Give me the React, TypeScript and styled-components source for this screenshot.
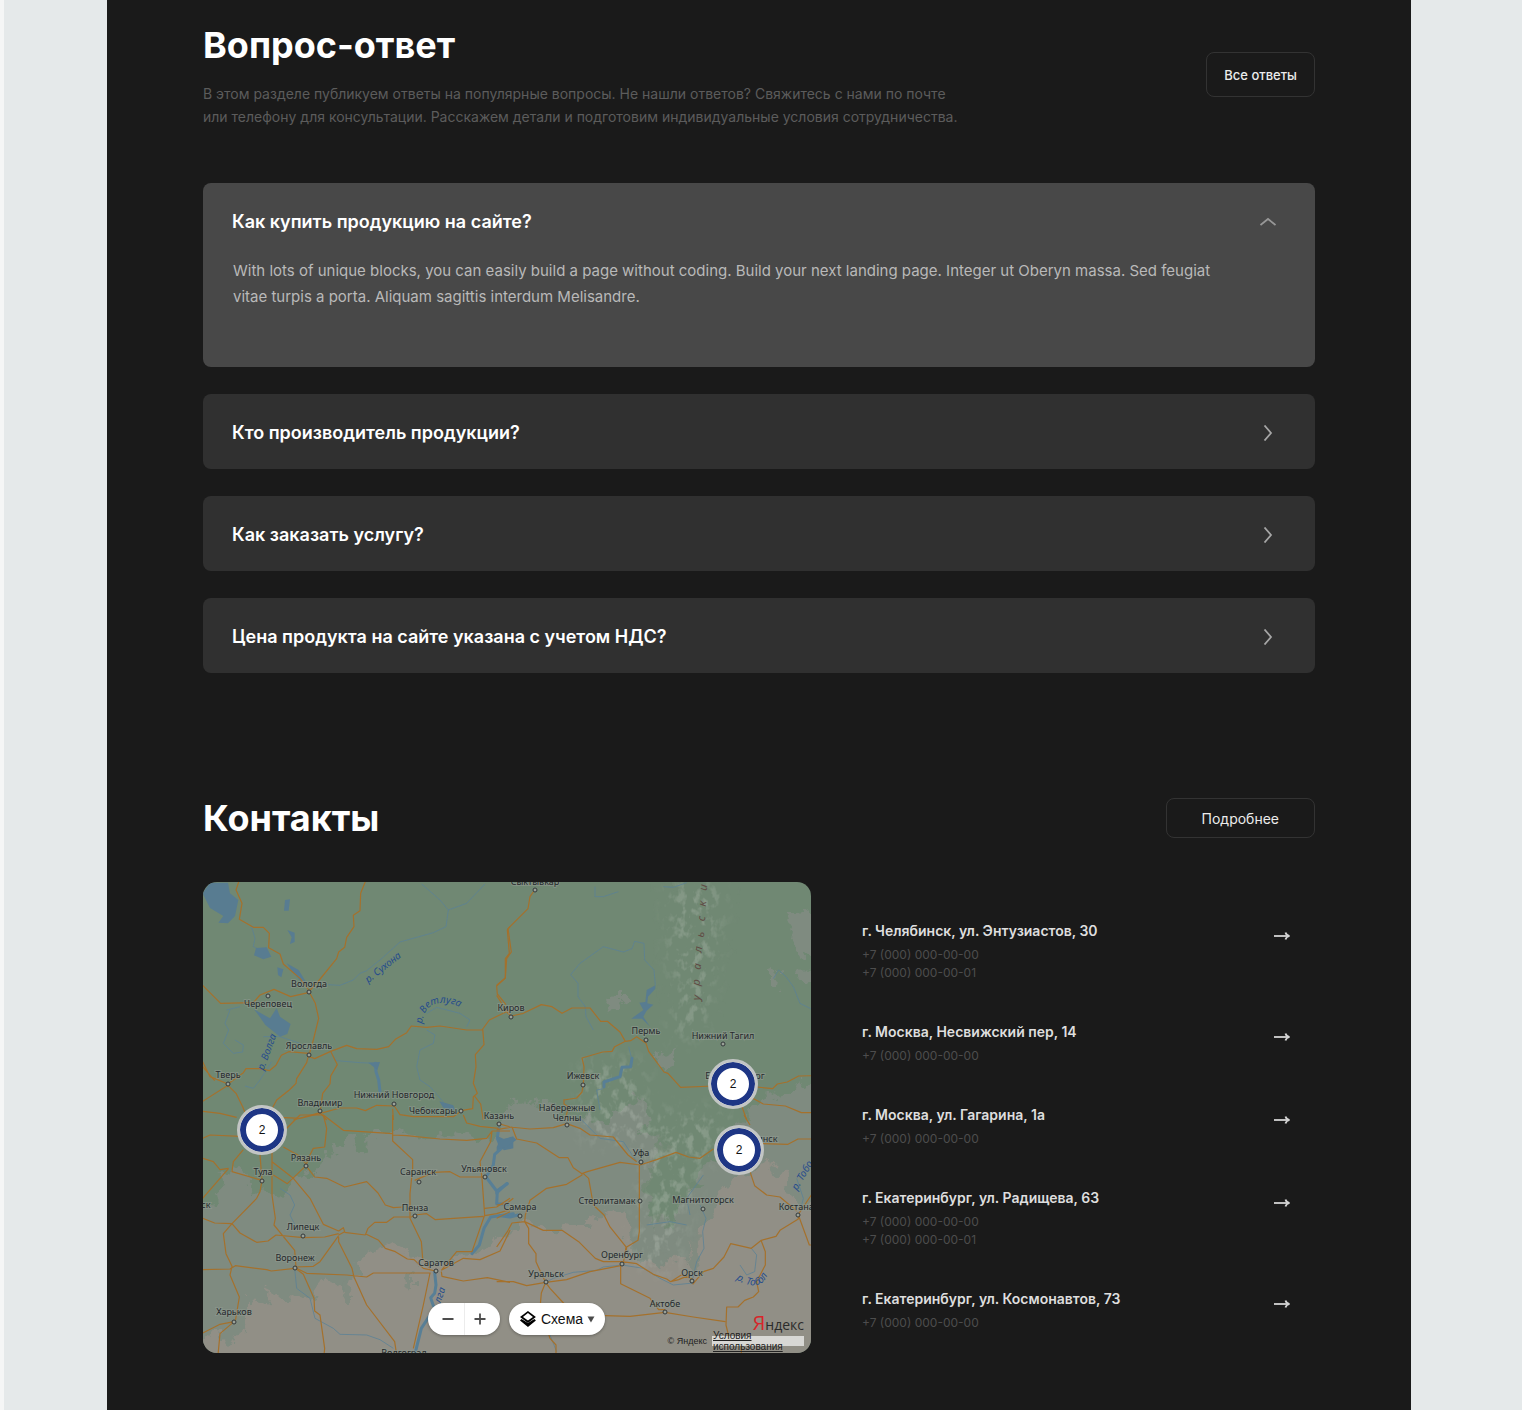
import React, { useState } from 'react';
import styled, { createGlobalStyle } from 'styled-components';

const GlobalStyle = createGlobalStyle`
  *, *::before, *::after { box-sizing: border-box; }
  body {
    margin: 0;
    background: #e5e9ea;
    border-left: 4px solid #f5f6f6;
    font-family: Inter, 'Liberation Sans', sans-serif;
    -webkit-font-smoothing: antialiased;
  }
  h2, h3, p, ul { margin: 0; padding: 0; }
  button { font-family: inherit; cursor: pointer; }
`;

const Backdrop = styled.div`
  padding: 0 111px 0 103px;
`;

const Page = styled.main`
  min-height: 100vh;
  padding: 21px 96px 57px;
  background: #1a1a1a;
`;

const SectionHead = styled.header<{ $gap: number }>`
  display: flex;
  justify-content: space-between;
  align-items: center;
  margin-bottom: ${(p) => p.$gap}px;
`;

const Title = styled.h2`
  color: #fff;
  font-size: 36px;
  line-height: 48px;
  font-weight: 700;
`;

const Lead = styled.p`
  margin-top: 13px;
  color: #5c5c5c;
  font-size: 14px;
  line-height: 23px;
`;

const OutlineButton = styled.button<{ $wide?: boolean }>`
  height: ${(p) => (p.$wide ? 40 : 45)}px;
  padding: 0 ${(p) => (p.$wide ? 35 : 17)}px;
  border: 1px solid #333;
  border-radius: 8px;
  background: transparent;
  color: #ececec;
  font-size: ${(p) => (p.$wide ? 14 : 13)}px;
  font-weight: ${(p) => (p.$wide ? 400 : 500)};
  white-space: nowrap;
`;

const FaqList = styled.div`
  display: flex;
  flex-direction: column;
  gap: 27px;
  margin-bottom: 121px;
`;

const FaqItem = styled.section<{ $open: boolean }>`
  border-radius: 8px;
  background: ${(p) => (p.$open ? '#484848' : '#303030')};
`;

const Question = styled.button`
  display: flex;
  align-items: center;
  justify-content: space-between;
  width: 100%;
  height: 75px;
  padding: 2px 39px 0 29px;
  border: 0;
  background: none;
  color: #fff;
  font-size: 18px;
  line-height: 24px;
  font-weight: 600;
  text-align: left;
`;

const Answer = styled.p`
  padding: 0 90px 57px 30px;
  color: #b9b9b9;
  font-size: 15px;
  line-height: 26px;
`;

const Contacts = styled.div`
  display: grid;
  grid-template-columns: minmax(0, 1fr) 453px;
  gap: 51px;
`;

const MapPanel = styled.div`
  position: relative;
  height: 471px;
  overflow: hidden;
  border-radius: 14px;
  background: #708873;
`;

const MapArt = styled.svg`
  display: block;
  width: 100%;
  height: 100%;
  font-family: 'Noto Sans', sans-serif;
`;

const Marker = styled.button<{ $x: number; $y: number }>`
  position: absolute;
  left: ${(p) => p.$x - 25}px;
  top: ${(p) => p.$y - 25}px;
  width: 50px;
  height: 50px;
  padding: 0;
  border: 3px solid #c2c5c4;
  border-radius: 50%;
  background: #fff;
  box-shadow: inset 0 0 0 6px #1e3685;
  color: #111;
  font-family: 'Liberation Sans', sans-serif;
  font-size: 12px;
`;

const MapControls = styled.div`
  position: absolute;
  left: 225px;
  bottom: 18px;
  display: flex;
  gap: 9px;
`;

const Pill = styled.div`
  display: flex;
  height: 32px;
  border-radius: 16px;
  overflow: hidden;
  background: #fff;
  box-shadow: 0 1px 3px rgba(0, 0, 0, 0.3);
`;

const ZoomButton = styled.button`
  display: flex;
  align-items: center;
  justify-content: center;
  width: 36px;
  padding: 0 0 0 4px;
  border: 0;
  background: none;
  & + & {
    padding: 0 4px 0 0;
    box-shadow: inset 1px 0 #ececec;
  }
`;

const LayerButton = styled.button`
  display: flex;
  align-items: center;
  gap: 4px;
  width: 96px;
  padding: 0 10px;
  border: 0;
  background: none;
  color: #111;
  font-family: 'Liberation Sans', sans-serif;
  font-size: 14px;
`;

const MapCredits = styled.div`
  position: absolute;
  right: 7px;
  bottom: 7px;
  display: grid;
  grid-template-columns: auto 92px;
  column-gap: 5px;
  justify-items: end;
  align-items: center;
  color: #222;
  font-family: 'Liberation Sans', sans-serif;
  font-size: 9px;
  line-height: 10px;
`;

const Logo = styled.span`
  grid-column: 1 / -1;
  margin-bottom: 1px;
  color: #2b2b2b;
  font-family: 'Open Sans', 'Noto Sans', sans-serif;
  font-size: 14px;
  line-height: 20px;
`;

const LogoLetter = styled.span`
  color: #d7262b;
  font-size: 20px;
`;

const Terms = styled.a`
  display: flex;
  align-items: center;
  width: 92px;
  height: 10px;
  padding-left: 1px;
  background: rgba(255, 255, 255, 0.65);
  color: #222;
  font-size: 10px;
  line-height: 11px;
`;

const Offices = styled.ul`
  display: flex;
  flex-direction: column;
  gap: 38px;
  padding: 37px 25px 0 0;
  list-style: none;
`;

const Office = styled.li`
  display: flex;
  justify-content: space-between;
`;

const Address = styled.h3`
  margin-bottom: 3px;
  color: #dedede;
  font-size: 14px;
  line-height: 24px;
  font-weight: 600;
`;

const Phone = styled.a`
  display: block;
  color: #4d4d4d;
  font-size: 12px;
  line-height: 18px;
  text-decoration: none;
`;

const OfficeLink = styled.a`
  display: flex;
  margin-top: 9px;
  height: 16px;
  color: #d4d4d4;
`;

const Chevron = ({ up }: { up: boolean }) => (
  <svg width="16" height="16" viewBox="0 0 16 16" fill="none" stroke={up ? '#979797' : '#a6a6a6'} strokeWidth="1.8" aria-hidden="true">
    <path d={up ? 'M.5 11 8 5l7.500 6' : 'M4.500.5l6.500 7.500-6.500 7.500'} />
  </svg>
);

const Arrow = () => (
  <svg width="16" height="16" viewBox="0 0 16 16" aria-hidden="true">
    <path d="M0 8h15" stroke="currentColor" strokeWidth="1.8" />
    <path d="M11.500 4.500C12 6.500 13.500 7.500 15.500 8 13.500 8.500 12 9.500 11.500 11.500" fill="none" stroke="currentColor" strokeWidth="1.8" />
  </svg>
);

/* [label, label x, baseline y, dot x, dot y] */
const cities: [string, number, number, number?, number?][] = [
  ['Вологда', 106, 105, 106, 110],
  ['Череповец', 65, 125, 65, 114],
  ['Ярославль', 106, 167, 106, 173],
  ['Тверь', 25, 196, 25, 202],
  ['Владимир', 117, 224, 117, 229],
  ['Нижний Новгород', 191, 216, 191, 222],
  ['Чебоксары', 230, 232, 258, 229],
  ['Киров', 308, 129, 308, 135],
  ['Сыктывкар', 332, 3, 332, 8],
  ['Пермь', 443, 152, 443, 158],
  ['Нижний Тагил', 520, 157, 520, 162],
  ['Ижевск', 380, 197, 380, 203],
  ['Екатеринбург', 532, 197],
  ['Набережные', 364, 229],
  ['Челны', 364, 239, 364, 243],
  ['Казань', 296, 237, 296, 242],
  ['Рязань', 103, 279, 103, 284],
  ['Тула', 60, 293, 59, 299],
  ['Саранск', 215, 293, 216, 300],
  ['Ульяновск', 281, 290, 282, 295],
  ['Пенза', 212, 329, 212, 334],
  ['Липецк', 100, 348, 100, 354],
  ['Воронеж', 92, 379, 92, 386],
  ['Саратов', 233, 384, 233, 389],
  ['Харьков', 31, 433, 31, 440],
  ['Волгоград', 201, 474],
  ['Брянск', -8, 326],
  ['Самара', 317, 328, 317, 334],
  ['Уфа', 438, 274, 438, 280],
  ['Стерлитамак', 404, 322, 437, 319],
  ['Магнитогорск', 500, 321, 500, 327],
  ['Челябинск', 551, 260],
  ['Костанай', 596, 328, 595, 333],
  ['Оренбург', 419, 376, 419, 382],
  ['Уральск', 343, 395, 343, 400],
  ['Орск', 489, 394, 489, 399],
  ['Актобе', 462, 425, 462, 430],
];

/* Letters of the mountain range name, spread along the ridge. */
const ridge: [string, number, number][] = [
  ['у', 494, 116], ['р', 494, 101], ['а', 495, 85], ['л', 496, 68],
  ['ь', 498, 53], ['с', 499, 37], ['к', 500, 22], ['и', 501, 6],
];

/* [text, x, y, angle] */
const riverNames: [string, number, number, number][] = [
  ['р. Сухона', 182, 88, -38],
  ['р. Волга', 67, 171, -70],
  ['р. Тобо', 602, 295, -60],
  ['лга', 240, 414, -72],
];

/* Every sheet is drawn at three units per pixel, from its own corner. */
const sheets = [
  {
    at: 'translate(-3 -2) scale(.33333)',
    roads:
      'M118 0 108 30 126 70 118 118 160 142 190 142 208 160 206 203 240 222 250 252 300 295 328 333 M498 0 482 40 480 92 460 106 462 140 440 172 434 202 416 216 410 236 358 300 328 333 M8 316 62 370 160 368 180 345 222 328 272 350 328 337 346 370 356 415 340 480 328 522 M8 545 30 590 84 612 130 578 138 566 180 566 208 572 228 556 244 526 266 515 326 520 M328 530 344 536 392 514 440 496 470 506 530 508 566 500 586 478 620 458 634 438 680 442 720 438 800 450 846 450 M846 450 868 420 905 402 930 390 M848 446 852 494 826 524 828 560 820 610 832 640 820 650 818 686 784 692 M822 646 842 672 850 720 M392 514 412 554 392 588 390 612 368 640 361 692 M326 524 320 548 290 596 288 610 268 630 230 660 214 690 M8 664 84 616 108 640 128 680 140 710 M8 560 44 602 M8 694 60 700 110 712 M240 712 300 715 361 700 420 684 470 684 496 692 530 676 583 678 600 704 640 710 760 710 784 692 M280 720 360 698 380 720 M578 686 580 720 M930 140 922 150 928 220 916 236 916 294 890 318 892 342 918 374',
    rivers:
      'M155 140 165 175 160 200 190 215 M383 314 420 316 460 300 480 280 500 272 540 240 600 186 700 158 738 140 745 90 720 60 665 12 M745 90 800 70 855 12 M215 545 180 600 160 625 135 618 M80 390 120 380 M90 390 75 430 86 450 70 490 100 520 128 516 130 495 105 480 M190 470 240 470 300 490 M390 515 410 542 480 548 530 550 M680 450 705 465 700 490 660 510 650 560 660 600 690 620 725 660 740 680 M680 400 710 382 780 400 810 420 800 440',
    wide: 'M526 550 528 575 536 600 540 634',
    lakes:
      'M8 40 30 8 84 8 90 40 115 60 105 108 84 130 55 128 70 108 30 84Z M255 60 270 58 266 92 252 92Z M262 150 284 158 284 186 270 192 275 172Z M168 204 200 202 214 230 190 238 162 226Z M232 262 250 268 244 292 234 285Z M260 250 296 270 318 306 300 302 272 268Z M162 388 210 415 230 384 240 410 272 432 262 462 240 470 196 435 180 412Z M505 548 540 546 532 570 522 562Z M718 664 760 676 765 690 730 684Z',
  },
  {
    at: 'translate(297 -2) scale(.33333)',
    roads:
      'M104 30 90 50 84 86 24 146 34 216 20 236 16 294 -10 316 M-10 346 24 400 34 408 70 400 124 374 156 380 186 400 216 384 270 384 302 424 322 424 360 456 376 484 392 482 410 470 438 490 446 514 492 576 504 580 542 622 640 618 M376 484 344 500 336 514 308 516 246 534 252 560 250 614 246 636 230 654 192 660 M192 658 192 672 206 680 195 720 M760 620 818 626 832 612 862 606 896 588 945 587 M750 650 790 672 856 678 904 698 945 698 M726 680 740 720',
    rivers:
      'M212 284 240 250 310 200 370 216 396 206 404 184 432 190 434 240 462 270 466 316 M212 284 234 310 234 350 256 380 258 410 280 450 M386 500 396 540 M310 626 290 630 300 690 M820 296 836 270 858 290 880 320 900 370 940 390 M285 20 285 50 310 50 355 35 M490 20 520 22 560 8',
    wide: 'M396 535 392 560 366 562 360 590 312 606 312 620',
    lakes:
      'M440 330 466 316 466 326 444 350 442 370 460 374 440 392 430 410 450 440 426 416 394 416 430 390 418 368 436 366Z',
  },
  {
    at: 'translate(-3 233) scale(.33333)',
    roads:
      'M8 70 30 60 120 64 M250 96 300 124 320 150 M240 60 300 0 370 0 430 46 578 56 M370 0 380 40 374 96 340 100 330 120 318 150 M130 104 100 140 96 170 186 196 M8 130 40 140 60 164 86 160 M8 250 86 160 M180 120 186 196 180 230 170 250 96 326 M96 326 70 356 78 416 96 454 90 480 118 546 106 618 M8 310 44 324 96 326 120 354 170 382 204 378 228 360 310 368 374 366 416 356 M216 110 216 240 226 310 222 330 284 406 288 456 M216 140 280 190 330 250 370 328 416 348 430 338 434 350 416 360 M220 180 262 206 318 152 344 186 380 190 434 216 500 200 534 234 556 270 580 278 610 276 M434 352 496 360 M496 360 504 340 524 322 560 322 582 306 634 306 645 300 680 296 706 314 850 304 M496 356 536 376 556 400 586 410 622 432 642 434 670 460 707 468 M416 366 416 380 456 460 462 486 500 570 584 680 590 720 M416 362 360 440 340 454 284 456 M8 464 90 462 106 452 200 464 214 468 284 460 M290 460 320 475 440 480 500 486 520 474 692 474 M690 474 670 570 640 700 M284 458 310 478 342 550 344 588 360 600 374 700 372 720 M8 654 60 628 102 620 60 656 54 720 M578 0 578 78 638 134 638 160 630 236 630 310 664 380 668 430 690 462 M578 60 620 62 720 72 800 76 860 70 876 48 930 48 M876 48 872 80 840 140 846 190 854 300 816 410 770 410 724 466 M644 196 700 172 750 170 780 186 854 186 M790 0 800 24 840 34 896 40 M724 466 790 430 840 434 900 408 930 346 M724 470 726 484 790 498 862 488 930 502 M854 280 890 276 930 250 M854 302 890 296 930 284',
    rivers:
      'M240 220 270 240 284 270 270 300 290 340 M284 460 290 520 330 550 345 610 400 640 420 658 500 660 540 674 580 700 M180 120 150 60',
    wide: 'M896 40 892 70 904 100 884 118 880 150 862 180 M858 186 890 228 922 206 M892 230 890 266 925 268 M940 296 872 306 852 340 838 390 816 416 M704 472 708 510 704 535 692 548 700 572 714 594 M690 600 664 640 646 712',
    lakes: 'M890 62 912 72 940 64 940 100 912 106 896 92Z',
  },
  {
    at: 'translate(297 233) scale(.33333)',
    roads:
      'M-10 24 30 36 90 42 160 38 200 26 240 40 270 60 340 66 384 120 410 140 M-10 44 36 36 50 72 110 84 178 128 204 128 220 158 246 176 246 180 200 208 140 220 90 256 76 300 74 320 M246 176 262 170 360 142 420 150 470 134 528 112 566 126 600 130 640 102 M780 86 864 88 894 72 945 72 M418 150 418 350 414 376 380 396 378 410 M250 176 266 190 280 270 312 300 330 336 378 396 370 444 M74 320 130 346 186 346 236 380 286 430 310 440 366 440 410 446 460 478 500 492 512 500 544 480 580 494 M362 452 270 470 200 494 137 502 80 512 40 500 -10 500 M362 450 362 506 450 550 476 584 495 584 M512 500 536 494 564 482 M578 508 610 470 640 460 672 426 692 386 754 400 784 376 828 364 840 346 895 312 895 298 934 240 M895 300 928 390 945 390 M750 170 764 212 800 240 840 246 890 288 M784 378 796 410 796 450 770 500 776 530 760 546 734 556 714 576 680 576 678 630 690 680 M315 602 390 604 495 592 580 606 676 620 M74 320 36 324 22 350 -10 396 M74 320 86 340 86 386 108 416 108 440 126 480 137 502 150 520 196 570 M137 502 124 534 120 580 150 670 168 690 168 716 M732 0 750 30 M-10 270 20 266 40 250 M-10 310 30 290 M724 690 724 716',
    rivers:
      'M137 502 160 490 220 472 290 466 310 456 366 450 430 460 480 490 520 510 580 504 M576 500 590 440 612 400 608 350 618 310 600 270 M610 180 560 250 570 300 M150 660 170 710 M754 400 770 420 764 470 740 480 720 450 M440 330 510 320 560 330 M890 190 910 250 900 290 M230 0 300 70 370 80 390 110 410 140 M-10 230 20 205',
    wide: 'M-10 234 20 206 M0 302 30 306 54 300',
    lakes: 'M-10 96 0 74 40 66 50 74 24 92-10 106Z',
  },
];

const MapDrawing = () => (
  <MapArt viewBox="0 0 608 471" preserveAspectRatio="xMidYMid slice" role="img" aria-label="Карта">
    <defs>
      <filter id="ragged" x="-5%" y="-5%" width="110%" height="110%">
        <feTurbulence type="fractalNoise" baseFrequency="0.07" numOctaves="4" seed="4" />
        <feDisplacementMap in="SourceGraphic" scale="26" xChannelSelector="R" yChannelSelector="G" />
      </filter>
      <filter id="relief" x="-10%" y="-10%" width="120%" height="120%">
        <feGaussianBlur in="SourceGraphic" stdDeviation="10" result="area" />
        <feTurbulence type="fractalNoise" baseFrequency="0.12 0.09" numOctaves="3" seed="9" />
        <feColorMatrix values="0 0 0 0 .52  0 0 0 0 .57  0 0 0 0 .51  5 0 0 0 -2.5" />
        <feComposite in2="area" operator="in" />
      </filter>
      <path id="vetluga" d="M219 142 Q221 122 238 121 Q252 120 264 130" />
      <path id="tobol" d="M533 397 Q546 406 557 402 Q566 398 572 370" />
    </defs>
    <g filter="url(#ragged)">
      <path
        fill="#7f8b80"
        d="M-20 330 10 322 22 302 14 290 36 285 50 308 80 312 92 296 112 290 125 276 140 258 150 256 158 270 170 252 200 252 225 258 262 250 280 262 290 250 300 234 310 222 330 215 345 226 370 232 392 240 408 238 420 222 440 212 446 232 440 250 470 262 450 290 446 330 470 345 480 320 500 285 520 270 528 250 540 238 560 214 590 208 630 180 V500 H-20Z"
      />
      <path fill="#7f8b80" d="M585 32 608 28 630 60 V84 L604 76 588 66 590 46Z M405 116 420 110 420 124 410 130Z M598 92 608 88 620 104 604 108Z M566 92 574 88 572 110 566 108Z M456 172 472 166 470 182 460 188Z" />
      <path
        fill="#918f86"
        d="M-20 470 10 452 30 460 44 440 44 412 62 424 64 404 80 416 112 418 122 392 136 412 150 400 160 376 186 362 210 376 250 380 280 368 306 350 330 340 345 354 362 344 385 344 400 330 424 334 428 366 456 388 478 368 486 380 490 358 504 340 514 316 530 298 560 282 580 290 592 320 630 326 V500 H-20Z"
      />
      <path fill="#708873" opacity=".75" d="M455 238 520 230 510 260 492 280 486 300 466 332 450 346 444 300 456 270Z" />
      <path fill="#7f8b80" opacity=".9" d="M448 350 470 345 474 374 462 382Z M490 348 496 346 494 390 488 388Z M206 390 214 386 214 404 208 404Z M136 402 146 396 150 420 140 420Z" />
    </g>
    <g filter="url(#relief)" opacity=".3">
      <path d="M466 0H520L514 70 500 150 470 160 474 110 466 60Z M440 230H530L490 300 470 390 430 380 440 300Z M380 180H440V260H380Z" />
    </g>
    {sheets.map((s) => (
      <g key={s.at} transform={s.at} fill="none" strokeLinejoin="round">
        <path d={s.rivers} stroke="#5c8295" strokeWidth="2.400" />
        <path d={s.wide} stroke="#587f96" strokeWidth="9" strokeLinecap="round" />
        <path d={s.lakes} fill="#587c91" />
        <path d={s.roads} stroke="#a5712c" strokeWidth="3.600" />
      </g>
    ))}
    <g fontSize="10" fontStyle="italic" fill="#274d8c">
      {riverNames.map(([t, x, y, a]) => (
        <text key={t} textAnchor="middle" transform={`translate(${x} ${y}) rotate(${a})`}>{t}</text>
      ))}
      <text><textPath href="#vetluga">р. Ветлуга</textPath></text>
      <text><textPath href="#tobol">р. Тобол</textPath></text>
    </g>
    <g fontSize="11" fontStyle="italic" fill="#604c45" textAnchor="middle">
      {ridge.map(([t, x, y]) => (
        <text key={t} transform={`translate(${x + 3} ${y}) rotate(-83)`}>{t}</text>
      ))}
    </g>
    <g fontSize="9" fill="#26292c" stroke="#8f9a90" strokeOpacity=".6" strokeWidth="2" paintOrder="stroke" textAnchor="middle">
      {cities.map(([t, x, y]) => (
        <text key={t} x={x} y={y}>{t}</text>
      ))}
    </g>
    <g fill="#9aa198" stroke="#33383a" strokeWidth="1">
      {cities.filter((c) => c[3] !== undefined).map(([t, , , x, y]) => (
        <circle key={t} cx={x} cy={y} r="2" />
      ))}
    </g>
  </MapArt>
);

const faq = [
  {
    q: 'Как купить продукцию на сайте?',
    a: 'With lots of unique blocks, you can easily build a page without coding. Build your next landing page. Integer ut Oberyn massa. Sed feugiat vitae turpis a porta. Aliquam sagittis interdum Melisandre.',
  },
  { q: 'Кто производитель продукции?', a: 'Производитель указан в карточке каждого товара.' },
  { q: 'Как заказать услугу?', a: 'Свяжитесь с нами по почте или телефону.' },
  { q: 'Цена продукта на сайте указана с учетом НДС?', a: 'Да, все цены указаны с учетом НДС.' },
];

const offices = [
  { address: 'г. Челябинск, ул. Энтузиастов, 30', phones: ['+7 (000) 000-00-00', '+7 (000) 000-00-01'] },
  { address: 'г. Москва, Несвижский пер, 14', phones: ['+7 (000) 000-00-00'] },
  { address: 'г. Москва, ул. Гагарина, 1а', phones: ['+7 (000) 000-00-00'] },
  { address: 'г. Екатеринбург, ул. Радищева, 63', phones: ['+7 (000) 000-00-00', '+7 (000) 000-00-01'] },
  { address: 'г. Екатеринбург, ул. Космонавтов, 73', phones: ['+7 (000) 000-00-00'] },
];

const markers = [
  { x: 530, y: 202 },
  { x: 536, y: 268 },
  { x: 59, y: 248 },
];

export default function App() {
  const [open, setOpen] = useState(0);

  return (
    <Backdrop>
      <GlobalStyle />
      <Page>
        <SectionHead $gap={55}>
          <div>
            <Title>Вопрос-ответ</Title>
            <Lead>
              В этом разделе публикуем ответы на популярные вопросы. Не нашли ответов? Свяжитесь с нами по почте
              <br />
              или телефону для консультации. Расскажем детали и подготовим индивидуальные условия сотрудничества.
            </Lead>
          </div>
          <OutlineButton type="button">Все ответы</OutlineButton>
        </SectionHead>

        <FaqList>
          {faq.map((item, i) => (
            <FaqItem key={item.q} $open={open === i}>
              <Question type="button" aria-expanded={open === i} onClick={() => setOpen(open === i ? -1 : i)}>
                {item.q}
                <Chevron up={open === i} />
              </Question>
              {open === i && <Answer>{item.a}</Answer>}
            </FaqItem>
          ))}
        </FaqList>

        <SectionHead $gap={40}>
          <Title>Контакты</Title>
          <OutlineButton type="button" $wide>Подробнее</OutlineButton>
        </SectionHead>

        <Contacts>
          <MapPanel>
            <MapDrawing />
            {markers.map((m) => (
              <Marker key={m.y} type="button" $x={m.x} $y={m.y}>2</Marker>
            ))}
            <MapControls>
              <Pill>
                <ZoomButton type="button" aria-label="Отдалить">
                  <svg width="12" height="12" viewBox="0 0 12 12" stroke="#4d4d4d" strokeWidth="1.800"><path d="M.5 6h11" /></svg>
                </ZoomButton>
                <ZoomButton type="button" aria-label="Приблизить">
                  <svg width="12" height="12" viewBox="0 0 12 12" stroke="#4d4d4d" strokeWidth="1.800"><path d="M.5 6h11M6 .5v11" /></svg>
                </ZoomButton>
              </Pill>
              <Pill>
                <LayerButton type="button">
                  <svg width="18" height="18" viewBox="0 0 18 18" aria-hidden="true">
                    <path d="M9 1 17 7 9 13 1 7z" fill="#000" />
                    <path d="M1 10.500 2.500 9 9 13 15.500 9 17 10.500 9 17z" fill="#000" />
                    <path d="M9 3 14 7 9 10.500 4 7z" fill="#fff" />
                  </svg>
                  Схема
                  <svg width="8" height="8" viewBox="0 0 8 8" aria-hidden="true"><path d="M.5 1.500h7L4 7.500z" fill="#4a4a4a" /></svg>
                </LayerButton>
              </Pill>
            </MapControls>
            <MapCredits>
              <Logo><LogoLetter>Я</LogoLetter>ндекс</Logo>
              <span>© Яндекс</span>
              <Terms href="#terms"><span>Условия использования</span></Terms>
            </MapCredits>
          </MapPanel>

          <Offices>
            {offices.map((o) => (
              <Office key={o.address}>
                <div>
                  <Address>{o.address}</Address>
                  {o.phones.map((p) => (
                    <Phone key={p} href={`tel:${p.replace(/[^+\d]/g, '')}`}>{p}</Phone>
                  ))}
                </div>
                <OfficeLink href="#map" aria-label={o.address}><Arrow /></OfficeLink>
              </Office>
            ))}
          </Offices>
        </Contacts>
      </Page>
    </Backdrop>
  );
}
